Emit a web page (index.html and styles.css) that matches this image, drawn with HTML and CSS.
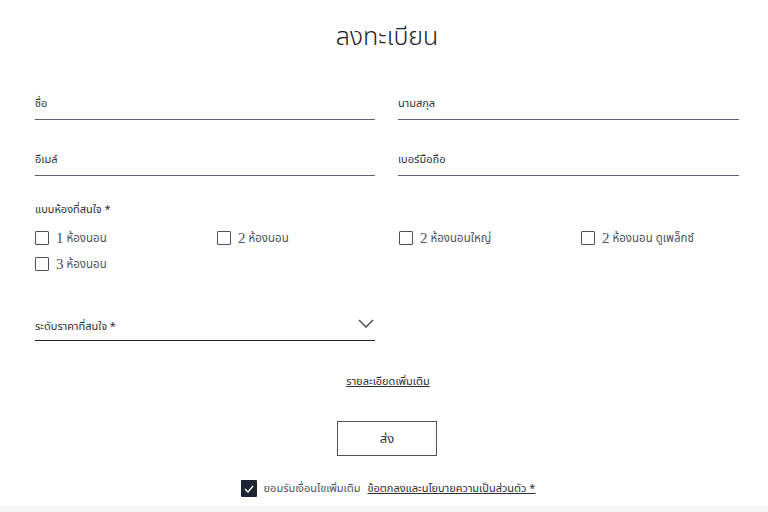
FILE: index.html
```html
<!DOCTYPE html>
<html lang="th">
<head>
    <meta charset="UTF-8">
    <meta name="viewport" content="width=device-width, initial-scale=1.0">
    <title>ลงทะเบียน</title>
    <link rel="stylesheet" href="styles.css">
</head>
<body>
    <form class="register">
        <h1>ลงทะเบียน</h1>

        <div class="fields">
            <label class="field"><span>ชื่อ</span></label>
            <label class="field"><span>นามสกุล</span></label>
            <label class="field"><span>อีเมล์</span></label>
            <label class="field"><span>เบอร์มือถือ</span></label>
        </div>

        <div class="rooms">
            <p class="group-title">แบบห้องที่สนใจ *</p>
            <div class="room-grid">
                <label class="room"><span class="box"></span><span class="num">1</span> ห้องนอน</label>
                <label class="room"><span class="box"></span><span class="num">2</span> ห้องนอน</label>
                <label class="room"><span class="box"></span><span class="num">2</span> ห้องนอนใหญ่</label>
                <label class="room"><span class="box"></span><span class="num">2</span> ห้องนอน ดูเพล็กซ์</label>
                <label class="room"><span class="box"></span><span class="num">3</span> ห้องนอน</label>
            </div>
        </div>

        <div class="select">
            <span>ระดับราคาที่สนใจ *</span>
            <svg width="16" height="9" viewBox="0 0 16 9"><path d="M1 1l7 7 7-7" fill="none" stroke="#4a5260" stroke-width="1.5"/></svg>
        </div>

        <a class="more" href="#">รายละเอียดเพิ่มเติม</a>

        <button class="send" type="button">ส่ง</button>

        <div class="consent">
            <span class="box checked">
                <svg width="10" height="8" viewBox="0 0 10 8"><path d="M1 4l3 3 5-6" fill="none" stroke="#fff" stroke-width="1.4"/></svg>
            </span>
            <span>ยอมรับเงื่อนไขเพิ่มเติม</span>
            <a href="#">ข้อตกลงและนโยบายความเป็นส่วนตัว *</a>
        </div>
    </form>
    <div class="footer-shade"></div>
</body>
</html>
```

FILE: styles.css
```css
body {
    margin: 0;
    background: #fff;
    color: #2b2f36;
    font-family: "Noto Sans Thai", "Noto Sans", "DejaVu Sans", sans-serif;
    font-size: 11px;
    font-stretch: 90%;
}
.register {
    width: 704px;
    margin-left: 35px;
    display: flex;
    flex-direction: column;
}
h1 {
    margin: 21px 0 0;
    font-size: 25px;
    font-weight: 300;
    font-stretch: 100%;
    text-align: center;
    color: #1e2228;
    line-height: 32px;
}
.fields {
    display: grid;
    grid-template-columns: 340px 341px;
    column-gap: 23px;
    row-gap: 23px;
    margin-top: 34px;
}
.field {
    display: block;
    height: 32px;
    border-bottom: 1px solid #5a6270;
}
.field span {
    display: block;
    line-height: 20px;
    padding-top: 7px;
}
.rooms {
    margin-top: 22px;
}
.group-title {
    margin: 0;
    line-height: 24px;
}
.room-grid {
    display: grid;
    grid-template-columns: repeat(4, 182px);
    row-gap: 4px;
    margin-top: 5px;
}
.room {
    display: flex;
    align-items: center;
    height: 22px;
    color: #4a5260;
    font-size: 11.5px;
}
.num {
    font-family: "Liberation Serif", serif;
    font-size: 15px;
    margin-right: 3px;
}
.box {
    width: 12px;
    height: 12px;
    border: 1.5px solid #4a5260;
    border-radius: 1px;
    margin-right: 7px;
    flex: none;
}
.select {
    width: 340px;
    margin-top: 31px;
    height: 32px;
    display: flex;
    align-items: center;
    justify-content: space-between;
    border-bottom: 1px solid #1e2228;
    padding-top: 2px;
}
.select span {
    padding-top: 4px;
}
.select svg {
    margin-right: 1px;
    margin-top: -2px;
}
.more {
    align-self: center;
    margin-top: 32px;
    color: #2b2f36;
    margin-left: 2px;
}
.send {
    align-self: center;
    margin-top: 31px;
    width: 100px;
    height: 35px;
    background: #fff;
    border: 1.5px solid #4a5260;
    font: inherit;
    font-size: 13px;
    color: #2b2f36;
}
.consent {
    align-self: center;
    margin-top: 24px;
    margin-left: 2px;
    display: flex;
    align-items: center;
    gap: 5px;
    color: #4a5260;
}
.consent a {
    color: #2b2f36;
    margin-left: 2px;
}
.box.checked {
    width: 16px;
    height: 17px;
    border: none;
    background: #1b2430;
    display: flex;
    align-items: center;
    justify-content: center;
    margin-right: 2px;
}
.footer-shade {
    position: fixed;
    left: 0;
    right: 0;
    bottom: 0;
    height: 7px;
    background: linear-gradient(#fafafa, #f1f1f1);
}
```
